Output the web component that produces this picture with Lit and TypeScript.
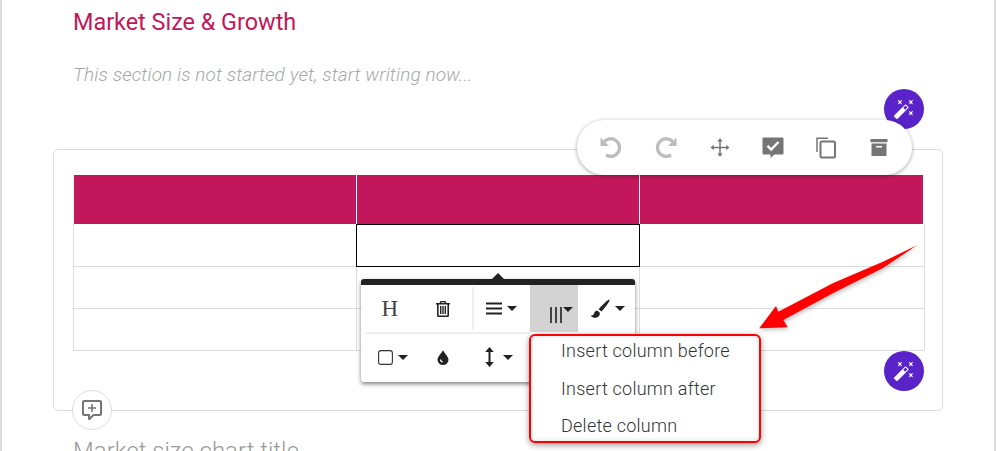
import { LitElement, html, css, svg } from "lit";
import { customElement } from "lit/decorators.js";

const wand = svg`<path d="M7.5,5.6L5,7L6.4,4.5L5,2L7.5,3.4L10,2L8.6,4.5L10,7L7.5,5.6M19.5,15.4L22,14L20.6,16.5L22,19L19.5,17.6L17,19L18.4,16.5L17,14L19.5,15.4M22,2L20.6,4.5L22,7L19.5,5.6L17,7L18.4,4.5L17,2L19.5,3.4L22,2M13.34,12.78L15.78,10.34L13.66,8.22L11.22,10.66L13.34,12.78M14.37,7.29L16.71,9.63C17.1,10 17.1,10.65 16.71,11.04L5.04,22.71C4.65,23.1 4,23.1 3.63,22.71L1.29,20.37C0.9,20 0.9,19.35 1.29,18.96L12.96,7.29C13.35,6.9 14,6.9 14.37,7.29Z" fill="#fff"/>`;

@customElement("app-root")
export class AppRoot extends LitElement {
  static styles = css`
    :host { display: block; width: 996px; height: 451px; overflow: hidden; position: relative; background: #fff; font-family: Roboto, sans-serif; }
    .page { box-sizing: border-box; width: 996px; height: 451px; border-left: 2px solid #ddd; border-right: 2px solid #ddd; overflow: hidden; }
    .title { margin: 9px 0 0 71px; font-size: 23.4px; line-height: 26px; font-weight: 400; color: #c2185b; }
    .hint { margin: 28px 0 0 71px; font-size: 19px; line-height: 24px; font-weight: 300; font-style: italic; color: #a8a8a8; letter-spacing: .1px; }
    .card { box-sizing: border-box; width: 890px; height: 262px; margin: 62px 0 0 51px; padding: 25px 19px 0; border: 1px solid #ddd; border-radius: 5px; }
    .grid { display: grid; width: 852px; grid-template-columns: 284px 283px 285px; grid-template-rows: 49px 43px 42px 42px; }
    .cell { box-sizing: border-box; border-right: 1px solid #ddd; border-bottom: 1px solid #ddd; }
    .cell.first { border-left: 1px solid #ddd; }
    .head { background: #c2185b; border: 0; border-right: 1px solid #fff; }
    .head.start { margin-left: 1px; }
    .head.last { border-right: 0; margin-right: 2px; }
    .sel { border: 1px solid #000; margin: 0 0 0 -1px; position: relative; }
    .chart { margin: 27px 0 0 71px; font-size: 24px; line-height: 26px; font-weight: 300; color: #9a9a9a; }

    .fab { position: absolute; width: 40px; height: 40px; border-radius: 50%; background: #5a22c9; display: flex; align-items: center; justify-content: center; }
    .fab svg { width: 22px; height: 22px; }
    .fab1 { left: 884px; top: 89px; }
    .fab2 { left: 884px; top: 351px; }
    .add { position: absolute; left: 72px; top: 390px; box-sizing: border-box; width: 40px; height: 40px; border-radius: 50%; background: #fff; border: 1px solid #ddd; display: flex; align-items: center; justify-content: center; }
    .add svg { width: 24px; height: 24px; }

    .tools { position: absolute; left: 577px; top: 120px; box-sizing: border-box; width: 335px; height: 55px; padding-left: 7px; border-radius: 28px; background: #fff; box-shadow: 0 1px 4px rgba(0,0,0,.35); display: flex; align-items: center; }
    .tool { width: 53px; display: flex; justify-content: center; }
    .tool.gap2 { margin-left: 2px; }
    .tool.gap1 { margin-left: 1px; }
    .tool svg { width: 26px; height: 26px; display: block; }

    .pop { position: absolute; left: 361px; top: 279px; box-sizing: border-box; width: 274px; height: 103px; background: #fff; border-top: 6px solid #222; border-radius: 3px; box-shadow: 0 2px 4px rgba(0,0,0,.5); }
    .caret { position: absolute; left: 130px; top: -12px; width: 0; height: 0; border-left: 7px solid transparent; border-right: 7px solid transparent; border-bottom: 7px solid #222; }
    .row { display: flex; padding-left: 5px; }
    .row1 { height: 47px; }
    .row2 { height: 50px; }
    .rule { margin-left: 5px; height: 2px; width: 164px; background: #eee; margin-bottom: -2px; }
    .btn { display: flex; align-items: center; justify-content: center; gap: 5px; color: #222; }
    .btn svg { display: block; }
    .w48 { width: 48px; }
    .w57 { width: 57px; }
    .w58 { width: 58px; }
    .w54 { width: 54px; }
    .w46 { width: 46px; }
    .w63 { width: 63px; }
    .div { border-right: 2px solid #eee; margin: 2px 0 2px; }
    .wide { gap: 9px; padding-left: 3px; box-sizing: border-box; }
    .nudge { padding-left: 2px; box-sizing: border-box; }
    .left { padding-right: 1px; box-sizing: border-box; }
    .active { background: #d3d3d3; align-items: flex-end; padding-bottom: 9px; box-sizing: border-box; gap: 0; position: relative; padding-left: 4px; }
    .h { font-family: "Liberation Serif", serif; font-size: 23px; line-height: 1; color: #444; }
    .tri { width: 0; height: 0; border-left: 5px solid transparent; border-right: 5px solid transparent; border-top: 5px solid #222; }
    .active .tri { position: absolute; left: 33px; top: 22px; }

    .menu { position: absolute; left: 529px; top: 334px; box-sizing: border-box; width: 232px; height: 109px; padding: 0 0 0 30px; background: #fff; border: 2px solid #f00; border-radius: 6px; box-shadow: 0 2px 6px rgba(0,0,0,.4), inset 0 0 5px rgba(0,0,0,.15); font-size: 18px; font-weight: 300; letter-spacing: .25px; color: #333; display: flex; flex-direction: column; overflow: hidden; }
    .menu div { flex: none; height: 37.5px; line-height: 30px; white-space: nowrap; }

    .arrow { position: absolute; left: 740px; top: 230px; width: 200px; height: 110px; filter: drop-shadow(1px 2px 2px rgba(0,0,0,.25)); }
  `;

  render() {
    return html`
      <div class="page">
        <div class="title">Market Size &amp; Growth</div>
        <div class="hint">This section is not started yet, start writing now...</div>
        <div class="card">
          <div class="grid">
            <div class="cell head start"></div><div class="cell head"></div><div class="cell head last"></div>
            <div class="cell first"></div><div class="cell sel"></div><div class="cell"></div>
            <div class="cell first"></div><div class="cell"></div><div class="cell"></div>
            <div class="cell first"></div><div class="cell"></div><div class="cell"></div>
          </div>
        </div>
        <div class="chart">Market size chart title</div>
      </div>

      <div class="fab fab1"><svg viewBox="0 0 24 24">${wand}</svg></div>
      <div class="fab fab2"><svg viewBox="0 0 24 24">${wand}</svg></div>
      <div class="add"><svg viewBox="0 0 24 24"><path fill="#757575" d="M9,22A1,1 0 0,1 8,21V18H4A2,2 0 0,1 2,16V4C2,2.89 2.9,2 4,2H20A2,2 0 0,1 22,4V16A2,2 0 0,1 20,18H13.9L10.2,21.71C10,21.9 9.75,22 9.5,22V22H9M10,16V19.08L13.08,16H20V4H4V16H10M11.2,6H12.8V9.2H16V10.8H12.8V14H11.2V10.8H8V9.2H11.2V6Z"/></svg></div>

      <div class="tools">
        <div class="tool"><svg viewBox="0 0 26 26"><path d="M5.6 7.5A8.8 8.8 0 1 1 8 20" fill="none" stroke="#bdbdbd" stroke-width="3.4"/><path d="M2.5 2.5L11 11H2.5Z" fill="#bdbdbd"/></svg></div>
        <div class="tool gap2"><svg viewBox="0 0 26 26"><path d="M20.4 7.5A8.8 8.8 0 1 0 18 20" fill="none" stroke="#bdbdbd" stroke-width="3.4"/><path d="M23.5 2.5L15 11H23.5Z" fill="#bdbdbd"/></svg></div>
        <div class="tool gap1"><svg viewBox="0 0 26 26"><path d="M13 5.5V19.5M5.5 12.5H20.5" stroke="#757575" stroke-width="1.5"/><path d="M13 3.2L15.8 6.4H10.2ZM13 21.8L15.8 18.6H10.2ZM3.5 12.5L6.7 9.7V15.3ZM22.5 12.5L19.3 9.7V15.3Z" fill="#757575"/></svg></div>
        <div class="tool"><svg viewBox="0 0 26 26"><path fill="#757575" d="M3.5 2.5H22.5A1 1 0 0 1 23.5 3.5V18.5A1 1 0 0 1 22.5 19.5H14.5L10.5 23V19.5H3.5A1 1 0 0 1 2.5 18.5V3.5A1 1 0 0 1 3.5 2.5Z"/><path d="M7.5 10.8L11.2 14.5L18.5 7" fill="none" stroke="#fff" stroke-width="2.4"/></svg></div>
        <div class="tool"><svg viewBox="0 0 26 26"><path d="M4 17V3.2H15" fill="none" stroke="#757575" stroke-width="1.5"/><rect x="7.5" y="6.5" width="14.5" height="16" rx="1.5" fill="none" stroke="#757575" stroke-width="2"/></svg></div>
        <div class="tool"><svg viewBox="0 0 26 26"><rect x="4.5" y="4" width="17" height="3.2" fill="#757575"/><path fill="#757575" fill-rule="evenodd" d="M5.5 8.6H20.5V21H5.5ZM10 11V12.6H16V11Z"/></svg></div>
      </div>

      <div class="pop">
        <div class="caret"></div>
        <div class="row row1">
          <div class="btn w48"><span class="h">H</span></div>
          <div class="btn w58 div"><svg width="14" height="16" viewBox="0 0 14 16"><path fill="#222" fill-rule="evenodd" d="M4.5 0H9.5L10.5 2H14V3.5H13V14.5A1.5 1.5 0 0 1 11.5 16H2.5A1.5 1.5 0 0 1 1 14.5V3.5H0V2H3.5ZM2.6 3.5V14.4H11.4V3.5ZM4 5H5.4V13H4ZM6.3 5H7.7V13H6.3ZM8.6 5H10V13H8.6ZM5.2 2H8.8L8.4 1.2H5.6Z"/></svg></div>
          <div class="btn w57"><svg width="16" height="13" viewBox="0 0 16 13"><path d="M0 1.5H16M0 6.5H16M0 11.5H16" stroke="#222" stroke-width="2.2"/></svg><span class="tri"></span></div>
          <div class="btn w48 active"><svg width="14" height="16" viewBox="0 0 14 16"><path d="M2 0V16M7 0V16M12 0V16" stroke="#333" stroke-width="1.8"/></svg><span class="tri"></span></div>
          <div class="btn w57 nudge"><svg width="20" height="20" viewBox="0 0 20 20"><path fill="#222" d="M19.5 0.6C18.2 0.2 12.8 5.6 8.6 10.2L11.4 12.6C15.6 8 20.2 2 19.5 0.6ZM7.2 11.4C4.8 11.6 4.4 13.4 3.8 15C3.3 16.2 2.2 16.6 0.6 16.6C1.8 18.4 4.4 19.4 6.6 18.6C9 17.8 10.2 15.6 9.8 13.8Z"/></svg><span class="tri"></span></div>
        </div>
        <div class="rule"></div>
        <div class="row row2">
          <div class="btn w54 left"><svg width="15" height="15" viewBox="0 0 15 15"><rect x=".6" y=".6" width="13.8" height="13.8" rx="2.5" fill="none" stroke="#333" stroke-width="1.1"/></svg><span class="tri"></span></div>
          <div class="btn w46"><svg width="12" height="15" viewBox="0 0 12 15"><path fill="#222" fill-rule="evenodd" d="M6 0C7 3 11.5 6.5 11.5 9.8A5.5 5.2 0 0 1 .5 9.8C.5 6.5 5 3 6 0ZM3 9.5A3 3 0 0 0 5.5 12.6L5.8 11.4A2 2 0 0 1 4.2 9.5Z"/></svg></div>
          <div class="btn w63 wide"><svg width="9" height="20" viewBox="0 0 9 20"><path d="M4.5 3V17" stroke="#222" stroke-width="2"/><path d="M4.5 0L8.8 5H.2ZM4.5 20L8.8 15H.2Z" fill="#222"/></svg><span class="tri"></span></div>
        </div>
      </div>

      <div class="menu">
        <div>Insert column before</div>
        <div>Insert column after</div>
        <div>Delete column</div>
      </div>

      <svg class="arrow" viewBox="0 0 200 110"><path fill="#f00" d="M177 15.3L143 31.7L93.3 53L38.3 81.7L36 76L19.3 98.3L47.7 97.3L43.3 90L93.3 63L143 38Z"/></svg>
    `;
  }
}
